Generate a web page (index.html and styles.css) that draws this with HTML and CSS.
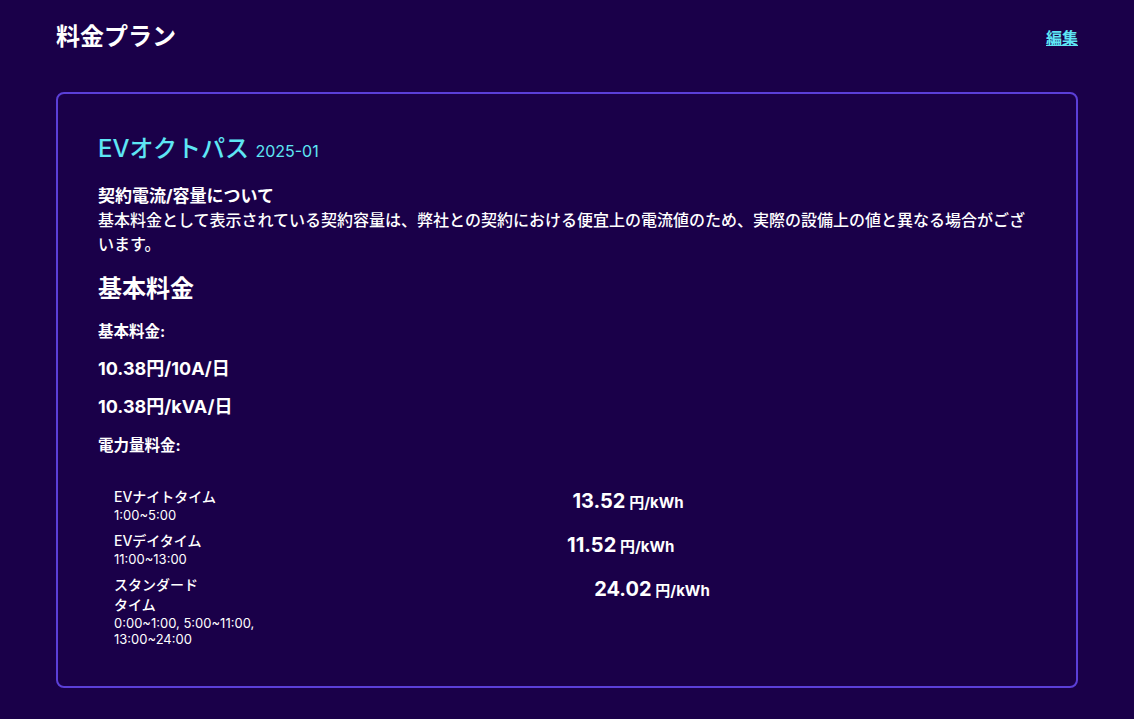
FILE: index.html
```html
<!DOCTYPE html>
<html lang="ja">
<head>
<meta charset="utf-8">
<title>料金プラン</title>
<link rel="stylesheet" href="styles.css">
</head>
<body>
<div class="page">
  <header class="header">
    <h1 class="page-title">料金プラン</h1>
    <a class="edit-link" href="#">編集</a>
  </header>
  <section class="card">
    <h2 class="plan-title">EVオクトパス <span class="plan-date">2025-01</span></h2>
    <h3 class="note-title">契約電流/容量について</h3>
    <p class="note-text">基本料金として表示されている契約容量は、弊社との契約における便宜上の電流値のため、実際の設備上の値と異なる場合がございます。</p>
    <h3 class="section-title">基本料金</h3>
    <p class="label">基本料金:</p>
    <p class="value">10.38円/10A/日</p>
    <p class="value">10.38円/kVA/日</p>
    <p class="label label-energy">電力量料金:</p>
    <div class="rates">
      <div class="rate-row">
        <div class="rate-name">
          <div class="rate-title">EVナイトタイム</div>
          <div class="rate-time">1:00~5:00</div>
        </div>
        <div class="rate-price"><span class="num">13.52</span> <span class="unit">円/kWh</span></div>
      </div>
      <div class="rate-row">
        <div class="rate-name">
          <div class="rate-title">EVデイタイム</div>
          <div class="rate-time">11:00~13:00</div>
        </div>
        <div class="rate-price"><span class="num">11.52</span> <span class="unit">円/kWh</span></div>
      </div>
      <div class="rate-row">
        <div class="rate-name">
          <div class="rate-title">スタンダード<br>タイム</div>
          <div class="rate-time">0:00~1:00, 5:00~11:00, 13:00~24:00</div>
        </div>
        <div class="rate-price"><span class="num">24.02</span> <span class="unit">円/kWh</span></div>
      </div>
    </div>
  </section>
</div>
</body>
</html>
```

FILE: styles.css
```css
* { box-sizing: border-box; }
html, body {
  margin: 0;
  padding: 0;
  background: #1a0049;
  color: #ffffff;
  font-family: Inter, "Noto Sans CJK JP", sans-serif;
}
.page {
  padding: 17px 56px 32px;
}
.header {
  display: flex;
  justify-content: space-between;
  align-items: center;
  height: 40px;
  margin-bottom: 35px;
}
.page-title {
  margin: 0;
  font-size: 24px;
  font-weight: 700;
  line-height: 32px;
}
.edit-link {
  color: #5ee6f4;
  font-size: 16px;
  font-weight: 700;
  text-decoration: underline;
}
.card {
  border: 2px solid #5b3fd8;
  border-radius: 8px;
  padding: 38px 40px 39px 40px;
}
.plan-title {
  margin: 0;
  color: #5ee6f4;
  font-size: 24px;
  line-height: 34px;
  font-weight: 500;
}
.plan-date {
  font-size: 16px;
  font-weight: 400;
}
.note-title {
  margin: 16px 0 0;
  font-size: 17px;
  line-height: 24px;
  font-weight: 700;
}
.note-text {
  margin: 0;
  font-size: 16px;
  line-height: 24px;
  font-weight: 500;
}
.section-title {
  margin: 17px 0 0;
  font-size: 24px;
  line-height: 32px;
  font-weight: 700;
}
.label {
  margin: 15px 0 0;
  font-size: 15.5px;
  line-height: 24px;
  font-weight: 700;
}
.value {
  margin: 12px 0 0;
  font-size: 18px;
  line-height: 26px;
  font-weight: 700;
}
.label-energy {
  margin-top: 14px;
}
.rates {
  margin-top: 29px;
  padding-left: 16px;
  display: flex;
  flex-direction: column;
  gap: 8px;
}
.rate-row {
  display: flex;
  align-items: flex-start;
}
.rate-name {
  max-width: 150px;
}
.rate-title {
  font-size: 14px;
  line-height: 20px;
  font-weight: 500;
}
.rate-time {
  font-size: 13px;
  line-height: 16px;
}
.rate-price {
  flex: 1;
  text-align: center;
  line-height: 28px;
  font-weight: 700;
  padding-left: 4px;
}
.num {
  font-size: 20px;
}
.unit {
  font-size: 15px;
}
```
